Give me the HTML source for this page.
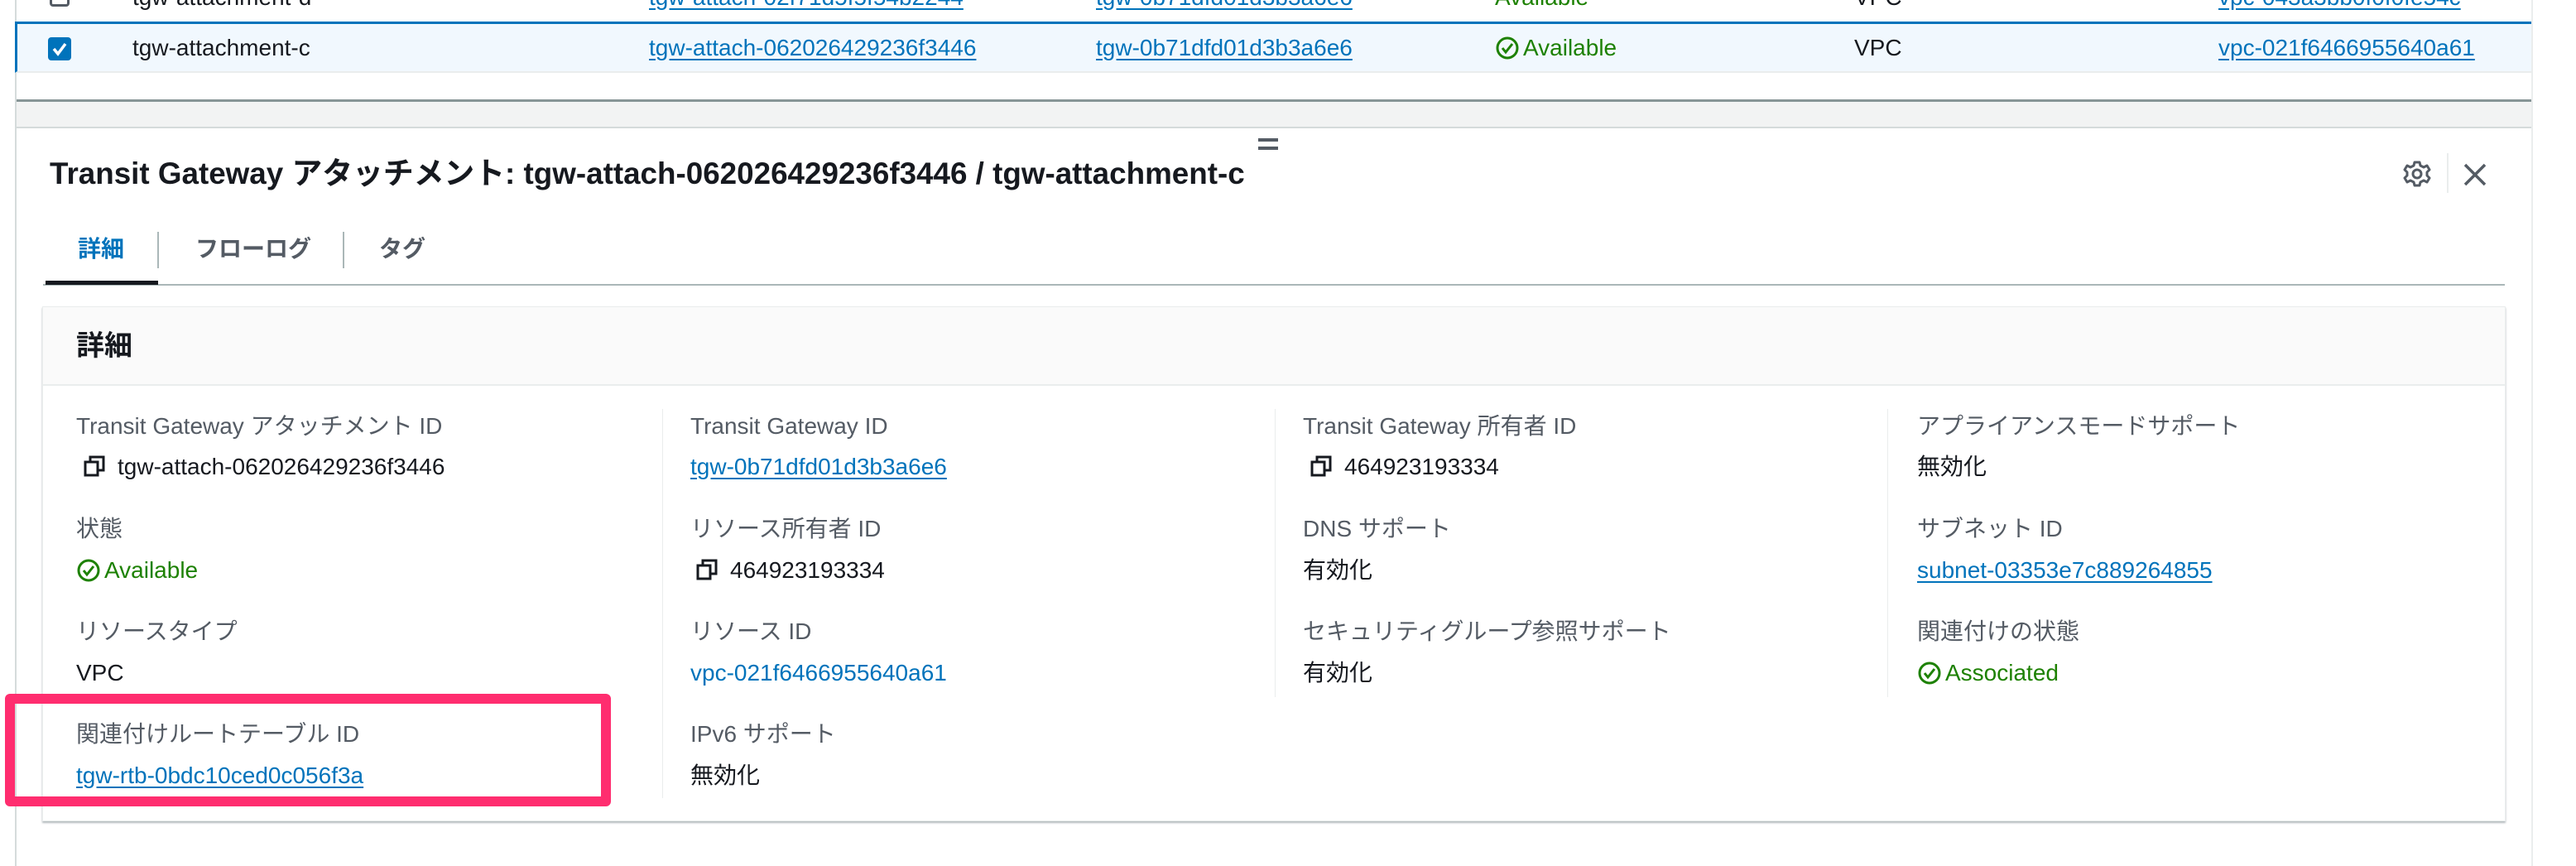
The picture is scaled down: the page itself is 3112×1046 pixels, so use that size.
<!DOCTYPE html>
<html><head><meta charset="utf-8"><style>
*{margin:0;padding:0;box-sizing:border-box}
body{width:3112px;height:1046px;overflow:hidden;background:#fff;font-family:"Liberation Sans","Noto Sans CJK JP",sans-serif;color:#16191f;position:relative}
.a{position:absolute;white-space:nowrap}
.lk{color:#0073bb;text-decoration:underline;text-underline-offset:4px}
.t{font-size:28px;line-height:34px}
.lb{font-size:28px;line-height:34px;color:#545b64}
.gr{color:#1d8102}
</style></head><body>
<div class="a" style="left:18px;top:0;width:2px;height:1046px;background:#d5dbdb"></div>
<div class="a" style="left:3058px;top:0;width:2px;height:1046px;background:#eaeded"></div>
<div class="a" style="left:20px;top:0;width:3038px;height:27px;overflow:hidden">
 <div class="a t" style="left:40px;top:-20px;width:24px;height:28px;border:3px solid #545b64;border-radius:4px"></div>
 <div class="a t" style="left:140px;top:-20px">tgw-attachment-d</div>
 <div class="a t lk" style="left:764px;top:-20px">tgw-attach-02f71d5f5f54b2244</div>
 <div class="a t lk" style="left:1304px;top:-20px">tgw-0b71dfd01d3b3a6e6</div>
 <div class="a t gr" style="left:1786px;top:-20px">Available</div>
 <div class="a t" style="left:2220px;top:-20px">VPC</div>
 <div class="a t lk" style="left:2660px;top:-20px">vpc-043a3bb0f0f0fe54c</div>
</div>
<div class="a" style="left:18px;top:26px;width:3040px;height:3px;background:#0073bb"></div>
<div class="a" style="left:18px;top:29px;width:3040px;height:59px;background:#f1f8fe;border-left:3px solid #0073bb;border-bottom:2px solid #eaeded"></div>
<div class="a" style="left:58px;top:45px;width:28px;height:28px;background:#0073bb;border-radius:4px"><svg width="28" height="28" viewBox="0 0 28 28"><path d="M7 14l5 6 9-12" stroke="#fff" stroke-width="3.5" fill="none"/></svg></div>
<div class="a t" style="left:160px;top:41px">tgw-attachment-c</div>
<div class="a t lk" style="left:784px;top:41px">tgw-attach-062026429236f3446</div>
<div class="a t lk" style="left:1324px;top:41px">tgw-0b71dfd01d3b3a6e6</div>
<div class="a t gr" style="left:1806px;top:41px"><svg width="30" height="30" viewBox="0 0 30 30" style="vertical-align:-6px;margin-right:4px"><circle cx="15" cy="15" r="12" stroke="#1d8102" stroke-width="3" fill="none"/><path d="M9 15l4 5 8-10" stroke="#1d8102" stroke-width="3" fill="none"/></svg>Available</div>
<div class="a t" style="left:2240px;top:41px">VPC</div>
<div class="a t lk" style="left:2680px;top:41px">vpc-021f6466955640a61</div>
<div class="a" style="left:20px;top:120px;width:3038px;height:35px;background:#f2f3f3;border-top:3px solid #879596;border-bottom:2px solid #d5dbdb"></div>
<div class="a" style="left:1520px;top:167px;width:24px;height:4px;background:#545b64"></div>
<div class="a" style="left:1520px;top:177px;width:24px;height:4px;background:#545b64"></div>
<div class="a" style="left:60px;top:188px;font-size:36.8px;line-height:44px;font-weight:bold">Transit Gateway アタッチメント: tgw-attach-062026429236f3446 / tgw-attachment-c</div>
<svg class="a" style="left:2902px;top:192px" width="36" height="36" viewBox="0 0 36 36"><circle cx="18" cy="18" r="5" stroke="#545b64" stroke-width="3" fill="none"/><path d="M15 4h6l1 4 4 2 4-2 3 5-3 3v4l3 3-3 5-4-2-4 2-1 4h-6l-1-4-4-2-4 2-3-5 3-3v-4l-3-3 3-5 4 2 4-2z" stroke="#545b64" stroke-width="3" fill="none" stroke-linejoin="round"/></svg>
<div class="a" style="left:2956px;top:185px;width:2px;height:48px;background:#eaeded"></div>
<svg class="a" style="left:2975px;top:196px" width="30" height="30" viewBox="0 0 30 30"><path d="M3 3l24 24M27 3L3 27" stroke="#545b64" stroke-width="3.5"/></svg>
<div class="a" style="left:94px;top:284px;font-size:28px;line-height:34px;font-weight:bold;color:#0073bb">詳細</div>
<div class="a" style="left:190px;top:280px;width:2px;height:44px;background:#aab7b8"></div>
<div class="a" style="left:236px;top:284px;font-size:28px;line-height:34px;font-weight:bold;color:#545b64">フローログ</div>
<div class="a" style="left:414px;top:280px;width:2px;height:44px;background:#aab7b8"></div>
<div class="a" style="left:458px;top:284px;font-size:28px;line-height:34px;font-weight:bold;color:#545b64">タグ</div>
<div class="a" style="left:52px;top:343px;width:2974px;height:2px;background:#aab7b8"></div>
<div class="a" style="left:55px;top:339px;width:136px;height:5px;background:#16191f"></div>
<div class="a" style="left:51px;top:370px;width:2976px;height:622px;background:#fff;border:1px solid #eaeded;box-shadow:0 2px 2px rgba(0,28,36,.3)"></div>
<div class="a" style="left:52px;top:371px;width:2974px;height:95px;background:#fafafa;border-bottom:2px solid #eaeded"></div>
<div class="a" style="left:92px;top:398px;font-size:34px;line-height:40px;font-weight:bold">詳細</div>
<div class="a" style="left:800px;top:494px;width:1px;height:470px;background:#eaeded"></div>
<div class="a" style="left:1540px;top:494px;width:1px;height:348px;background:#eaeded"></div>
<div class="a" style="left:2280px;top:494px;width:1px;height:348px;background:#eaeded"></div>
<div class="a lb" style="left:92px;top:498px">Transit Gateway アタッチメント ID</div>
<div class="a t" style="left:100px;top:547px"><svg width="28" height="28" viewBox="0 0 28 28" style="vertical-align:-4px;margin-right:14px"><rect x="3" y="9" width="15" height="16" stroke="#16191f" stroke-width="3" fill="none"/><path d="M9 9V3h16v16h-7" stroke="#16191f" stroke-width="3" fill="none"/></svg>tgw-attach-062026429236f3446</div>
<div class="a lb" style="left:92px;top:622px">状態</div>
<div class="a t gr" style="left:92px;top:672px"><svg width="30" height="30" viewBox="0 0 30 30" style="vertical-align:-6px;margin-right:4px"><circle cx="15" cy="15" r="12" stroke="#1d8102" stroke-width="3" fill="none"/><path d="M9 15l4 5 8-10" stroke="#1d8102" stroke-width="3" fill="none"/></svg>Available</div>
<div class="a lb" style="left:92px;top:746px">リソースタイプ</div>
<div class="a t" style="left:92px;top:796px">VPC</div>
<div class="a lb" style="left:92px;top:870px">関連付けルートテーブル ID</div>
<div class="a t lk" style="left:92px;top:920px">tgw-rtb-0bdc10ced0c056f3a</div>
<div class="a lb" style="left:834px;top:498px">Transit Gateway ID</div>
<div class="a t lk" style="left:834px;top:547px">tgw-0b71dfd01d3b3a6e6</div>
<div class="a lb" style="left:834px;top:622px">リソース所有者 ID</div>
<div class="a t" style="left:840px;top:672px"><svg width="28" height="28" viewBox="0 0 28 28" style="vertical-align:-4px;margin-right:14px"><rect x="3" y="9" width="15" height="16" stroke="#16191f" stroke-width="3" fill="none"/><path d="M9 9V3h16v16h-7" stroke="#16191f" stroke-width="3" fill="none"/></svg>464923193334</div>
<div class="a lb" style="left:834px;top:746px">リソース ID</div>
<div class="a t" style="left:834px;top:796px;color:#0073bb">vpc-021f6466955640a61</div>
<div class="a lb" style="left:834px;top:870px">IPv6 サポート</div>
<div class="a t" style="left:834px;top:920px">無効化</div>
<div class="a lb" style="left:1574px;top:498px">Transit Gateway 所有者 ID</div>
<div class="a t" style="left:1582px;top:547px"><svg width="28" height="28" viewBox="0 0 28 28" style="vertical-align:-4px;margin-right:14px"><rect x="3" y="9" width="15" height="16" stroke="#16191f" stroke-width="3" fill="none"/><path d="M9 9V3h16v16h-7" stroke="#16191f" stroke-width="3" fill="none"/></svg>464923193334</div>
<div class="a lb" style="left:1574px;top:622px">DNS サポート</div>
<div class="a t" style="left:1574px;top:672px">有効化</div>
<div class="a lb" style="left:1574px;top:746px">セキュリティグループ参照サポート</div>
<div class="a t" style="left:1574px;top:796px">有効化</div>
<div class="a lb" style="left:2316px;top:498px">アプライアンスモードサポート</div>
<div class="a t" style="left:2316px;top:547px">無効化</div>
<div class="a lb" style="left:2316px;top:622px">サブネット ID</div>
<div class="a t lk" style="left:2316px;top:672px">subnet-03353e7c889264855</div>
<div class="a lb" style="left:2316px;top:746px">関連付けの状態</div>
<div class="a t gr" style="left:2316px;top:796px"><svg width="30" height="30" viewBox="0 0 30 30" style="vertical-align:-6px;margin-right:4px"><circle cx="15" cy="15" r="12" stroke="#1d8102" stroke-width="3" fill="none"/><path d="M9 15l4 5 8-10" stroke="#1d8102" stroke-width="3" fill="none"/></svg>Associated</div>
<div class="a" style="left:6px;top:838px;width:732px;height:136px;border:12px solid #ff2d6f;border-radius:6px"></div>
</body></html>
